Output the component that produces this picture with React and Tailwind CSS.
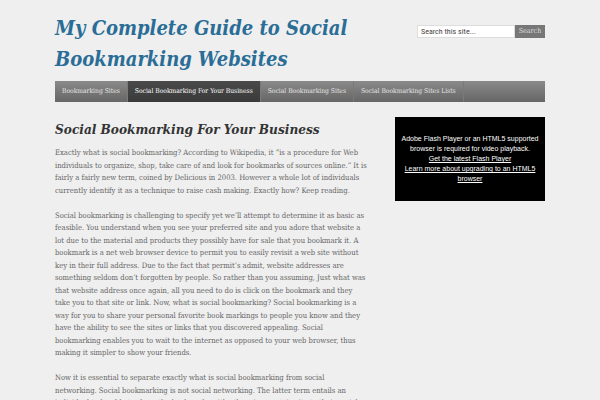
import React from 'react';

const nav = [
  { label: 'Bookmarking Sites' },
  { label: 'Social Bookmarking For Your Business', active: true },
  { label: 'Social Bookmarking Sites' },
  { label: 'Social Bookmarking Sites Lists' },
];

const paragraphs = [
  'Exactly what is social bookmarking? According to Wikipedia, it “is a procedure for Web individuals to organize, shop, take care of and look for bookmarks of sources online.” It is fairly a fairly new term, coined by Delicious in 2003. However a whole lot of individuals currently identify it as a technique to raise cash making. Exactly how? Keep reading.',
  'Social bookmarking is challenging to specify yet we’ll attempt to determine it as basic as feasible. You understand when you see your preferred site and you adore that website a lot due to the material and products they possibly have for sale that you bookmark it. A bookmark is a net web browser device to permit you to easily revisit a web site without key in their full address. Due to the fact that permit’s admit, website addresses are something seldom don’t forgotten by people. So rather than you assuming, Just what was that website address once again, all you need to do is click on the bookmark and they take you to that site or link. Now, what is social bookmarking? Social bookmarking is a way for you to share your personal favorite book markings to people you know and they have the ability to see the sites or links that you discovered appealing. Social bookmarking enables you to wait to the internet as opposed to your web browser, thus making it simpler to show your friends.',
  'Now it is essential to separate exactly what is social bookmarking from social networking. Social bookmarking is not social networking. The latter term entails an individual to be able to share the bookmarks with others in a certain site to their social network and more.',
];

export default function App() {
  return (
    <div className="h-[400px] overflow-hidden bg-[#efefef] font-['DejaVu_Serif',serif] font-stretch-condensed">
      <div className="mx-auto w-[490px]">
        {/* Header */}
        <div className="flex justify-between pt-[13px]">
          <h1 className="w-[340px] text-[20px] font-bold italic leading-[31px] text-[#2a6d96]">
            My Complete Guide to Social Bookmarking Websites
          </h1>
          <div className="mt-[12px] flex h-[13px]">
            <input
              className="h-[13px] w-[98px] border border-[#ddd] bg-white px-[3px] font-['Roboto',sans-serif] text-[8px] text-[#444] outline-none"
              defaultValue="Search this site..."
            />
            <button className="h-[13px] w-[30px] bg-[#777] text-[7px] text-[#ddd]">Search</button>
          </div>
        </div>

        {/* Nav */}
        <div className="mt-[6px] flex h-[21px] bg-gradient-to-b from-[#8a8a8a] to-[#666]">
          {nav.map(n => (
            <div
              key={n.label}
              className={`flex items-center border-r border-[#7a7a7a] px-[7px] text-[6.7px] ${n.active ? 'bg-gradient-to-b from-[#4a4a4a] to-[#3a3a3a] text-white' : 'text-[#e4e4e4]'}`}
            >
              {n.label}
            </div>
          ))}
        </div>

        {/* Body */}
        <div className="mt-[17px] flex justify-between">
          <div className="w-[313px]">
            <h2 className="text-[13.5px] font-bold italic leading-[20px] text-[#333]">Social Bookmarking For Your Business</h2>
            <div className="mt-[8px] flex flex-col gap-[12.5px]">
              {paragraphs.map((p, i) => (
                <p key={i} className="text-[7.6px] leading-[12.5px] text-[#666]">{p}</p>
              ))}
            </div>
          </div>
          <div className="-mt-[2px] flex h-[84px] w-[150px] items-center justify-center bg-black px-[6px] text-center font-['Liberation_Sans',sans-serif] font-stretch-normal text-[7px] leading-[10px] text-white">
            <div>
              Adobe Flash Player or an HTML5 supported browser is required for video playback.
              <br />
              <span className="text-white underline">Get the latest Flash Player </span>
              <br />
              <span className="text-white underline">Learn more about upgrading to an HTML5 browser</span>
            </div>
          </div>
        </div>
      </div>
    </div>
  );
}
